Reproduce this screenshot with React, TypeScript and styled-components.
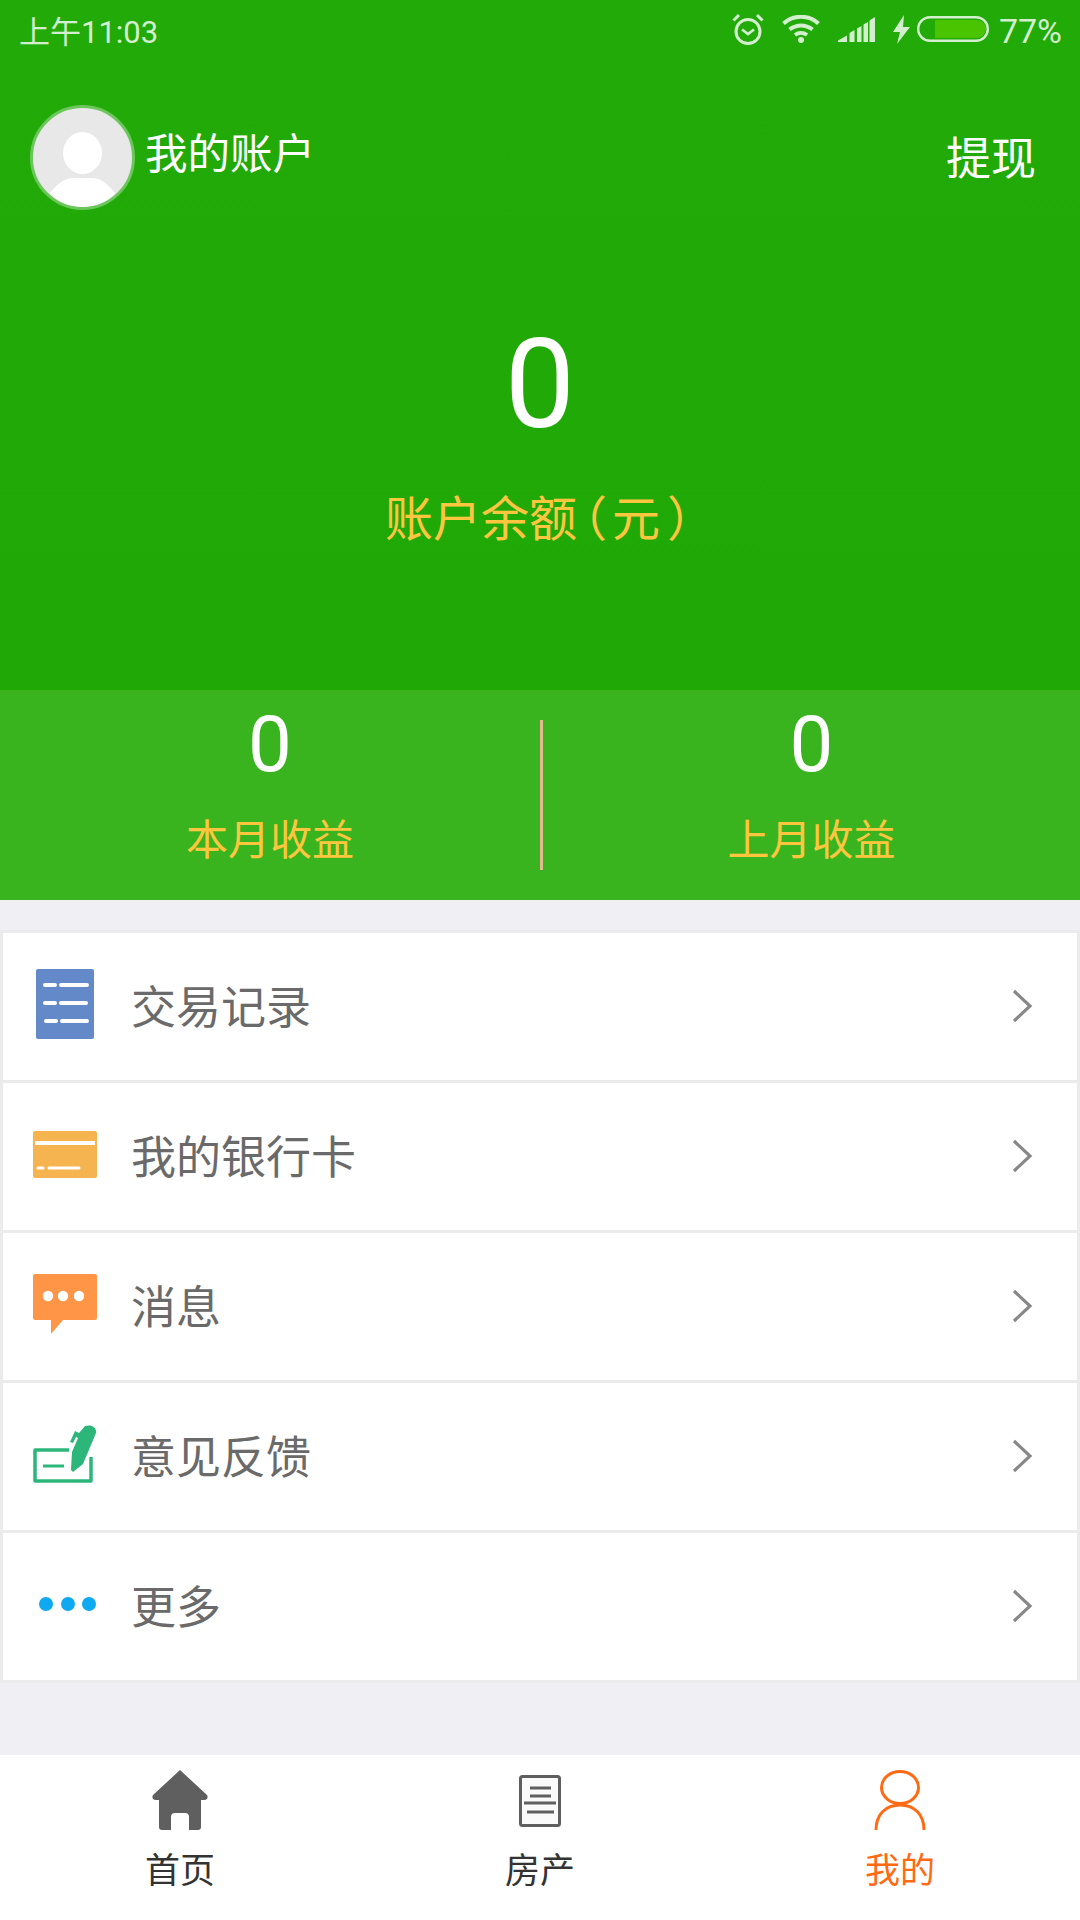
import React from 'react';
import styled, { createGlobalStyle } from 'styled-components';

const GlobalStyle = createGlobalStyle`
  html, body {
    margin: 0;
    padding: 0;
    background: #efeff4;
    font-family: Roboto, "Noto Sans CJK SC", sans-serif;
  }
  * { box-sizing: border-box; }
`;

const Page = styled.div`
  width: 1080px;
  height: 1920px;
  display: flex;
  flex-direction: column;
  background: #efeff4;
  overflow: hidden;
`;

const Hero = styled.header`
  height: 690px;
  background: linear-gradient(180deg, #22aa09 0%, #20a806 100%);
  display: flex;
  flex-direction: column;
`;

const StatusBar = styled.div`
  height: 64px;
  padding: 0 18px 6px 19px;
  display: flex;
  align-items: center;
  justify-content: space-between;
  color: #d4efcf;
  font-size: 31px;
`;

const StatusIcons = styled.div`
  display: flex;
  align-items: center;
`;

const Percent = styled.span`
  margin: 3px 0 0 10px;
  font-size: 34px;
`;

const AccountRow = styled.div`
  height: 105px;
  margin-top: 41px;
  padding: 0 44px 0 30px;
  display: flex;
  align-items: center;
`;

const Avatar = styled.div`
  width: 105px;
  height: 105px;
  border-radius: 50%;
  border: 3px solid #6cc65c;
  background: #e8e8e8;
  overflow: hidden;
  flex: none;
`;

const AccountName = styled.span`
  margin-left: 10px;
  margin-bottom: 14px;
  font-size: 42.500px;
  color: #fff;
`;

const Withdraw = styled.span`
  margin-left: auto;
  margin-bottom: 4px;
  font-size: 45px;
  color: #fff;
`;

const Balance = styled.div`
  margin-top: 105px;
  text-align: center;
  font-size: 125px;
  line-height: 140px;
  color: #fff;
`;

const BalanceLabel = styled.div`
  margin-top: 33px;
  text-align: center;
  font-size: 48px;
  line-height: 64px;
  color: #fdc63e;
`;

const Paren = styled.span<{ $side: 'left' | 'right' }>`
  font-feature-settings: "halt";
  margin-left: ${p => (p.$side === 'left' ? '6px' : '7px')};
  margin-right: ${p => (p.$side === 'left' ? '5px' : '4px')};
`;

const Earnings = styled.section`
  height: 210px;
  background: #3ab41e;
  display: flex;
  align-items: center;
`;

const EarningCell = styled.div<{ $first?: boolean }>`
  flex: ${p => (p.$first ? '0 0 540px' : '1')};
  height: 100%;
  text-align: center;
`;

const EarningValue = styled.div`
  margin-top: 10px;
  font-size: 78px;
  line-height: 90px;
  color: #fff;
`;

const EarningLabel = styled.div`
  margin-top: 21px;
  font-size: 42px;
  line-height: 60px;
  color: #fdc63e;
`;

const Divider = styled.div`
  width: 3px;
  height: 150px;
  flex: none;
  background: #e3b98e;
`;

const MenuList = styled.ul`
  list-style: none;
  margin: 30px 0 0;
  padding: 3px;
  background: #ebebeb;
  display: flex;
  flex-direction: column;
  gap: 3px;
`;

const MenuRow = styled.li`
  height: 147px;
  background: #fff;
  display: flex;
  align-items: center;
  padding: 0 43px 5px 0;
  svg.chevron { margin-top: 3px; }
`;

const MenuIcon = styled.div`
  width: 128px;
  display: flex;
  align-items: center;
  flex: none;
`;

const MenuText = styled.span`
  font-size: 45px;
  color: #6a6a6a;
  flex: 1;
`;

const TabBar = styled.nav`
  margin-top: auto;
  height: 165px;
  background: #fff;
  display: grid;
  grid-template-columns: repeat(3, 360px);
`;

const Tab = styled.div<{ $active?: boolean }>`
  display: flex;
  flex-direction: column;
  align-items: center;
  padding-top: 15px;
  font-size: 35px;
  line-height: 50px;
  color: ${p => (p.$active ? '#ff6a13' : '#333')};
  svg { margin-bottom: 17px; display: block; }
`;

const AlarmIcon = () => (
  <svg width="32" height="32" viewBox="0 0 32 32" fill="none" stroke="#d4efcf" strokeWidth="3" style={{ marginRight: 18 }}>
    <circle cx="16" cy="18.500" r="12" />
    <path d="M10 16.500l6 4.500 6-4.500" strokeWidth="2.600" />
    <path d="M1.500 7.500 7 2M30.500 7.500 25 2" />
  </svg>
);

const WifiIcon = () => (
  <svg width="38" height="28" viewBox="0 0 38 28" fill="none" stroke="#d4efcf" strokeWidth="4" style={{ marginRight: 18 }}>
    <path d="M1.500 8.500C11.500-.5 26.500-.5 36.500 8.500" />
    <path d="M7.500 14.500c7-5.500 16-5.500 23 0" />
    <path d="M13 20c3.600-2.700 8.400-2.700 12 0" />
    <circle cx="19" cy="25" r="3" fill="#d4efcf" stroke="none" />
  </svg>
);

const SignalIcon = () => (
  <svg width="37" height="25" viewBox="0 0 37 25" fill="#d4efcf" style={{ marginRight: 18 }}>
    <path d="M0 25v-1.500l9-5V25zM11.500 25V16l5-3v12zM19 25V11.500l4.500-2.500v16zM25.500 25V7.500l4.500-2.500v20zM31.500 25V3.500L37 0v25z" />
  </svg>
);

const BoltIcon = () => (
  <svg width="17" height="29" viewBox="0 0 17 29" fill="#d4efcf" style={{ marginRight: 7 }}>
    <path d="M11 0 0 17h7L4 29 17 12h-7z" />
  </svg>
);

const BatteryIcon = () => (
  <svg width="72" height="26" viewBox="0 0 72 26">
    <rect x="1.200" y="1.200" width="69.600" height="23.600" rx="11.800" fill="none" stroke="#d4efcf" strokeWidth="2.400" />
    <path d="M18 4h42a9 9 0 0 1 0 18H18z" fill="#4bc400" />
  </svg>
);

const ChevronIcon = () => (
  <svg className="chevron" width="22" height="34" viewBox="0 0 22 34" fill="none" stroke="#888" strokeWidth="3.200">
    <path d="M2 2l16 15L2 32" />
  </svg>
);

const RecordsIcon = () => (
  <svg width="58" height="70" viewBox="0 0 58 70" style={{ marginLeft: 33 }}>
    <rect width="58" height="70" rx="2" fill="#6389c9" />
    <g stroke="#fff" strokeWidth="4" strokeLinecap="round">
      <path d="M9 16h10M25 16h26M9 34h10M25 34h25M10 52h10M26 52h25" />
    </g>
  </svg>
);

const CardIcon = () => (
  <svg width="64" height="47" viewBox="0 0 64 47" style={{ marginLeft: 30 }}>
    <rect width="64" height="47" rx="2" fill="#f5b44f" />
    <path d="M2 12h60" stroke="#fff" strokeWidth="4" />
    <path d="M5 37h5M16 37h30" stroke="#fff" strokeWidth="3" strokeLinecap="round" />
  </svg>
);

const MessageIcon = () => (
  <svg width="64" height="60" viewBox="0 0 64 60" style={{ marginLeft: 30 }}>
    <path d="M2 0h60a2 2 0 0 1 2 2v42a2 2 0 0 1-2 2H30L18 60V46H2a2 2 0 0 1-2-2V2a2 2 0 0 1 2-2z" fill="#ff9647" />
    <circle cx="15" cy="22" r="5.200" fill="#fff" />
    <circle cx="30" cy="22" r="5.200" fill="#fff" />
    <circle cx="46" cy="22" r="5.200" fill="#fff" />
  </svg>
);

const FeedbackIcon = () => (
  <svg width="64" height="58" viewBox="0 0 64 58" style={{ marginLeft: 30 }}>
    <path d="M36 25H2v31h56V32" fill="none" stroke="#2cb67a" strokeWidth="3.500" strokeLinejoin="round" />
    <path d="M10 41h21" stroke="#2cb67a" strokeWidth="3" />
    <path d="M52 1c6-2 12 1 11 7L50 39l-10 8-2-2 1-18 6-14-2-1-3 6-3-1 5-11 4 2z" fill="#2cb67a" />
  </svg>
);

const MoreIcon = () => (
  <svg width="58" height="14" viewBox="0 0 58 14" style={{ marginLeft: 36 }}>
    <circle cx="7" cy="7" r="7" fill="#0ea9f0" />
    <circle cx="29" cy="7" r="7" fill="#0ea9f0" />
    <circle cx="50" cy="7" r="7" fill="#0ea9f0" />
  </svg>
);

const HomeIcon = () => (
  <svg width="58" height="60" viewBox="0 0 58 60">
    <path d="M29 0 56 25q2 4-2 5h-4v27a3 3 0 0 1-3 3H38V47a4 4 0 0 0-4-4H24a4 4 0 0 0-4 4v13h-9a3 3 0 0 1-3-3V30H4q-4-1-2-5z" fill="#5f5f5f" />
  </svg>
);

const ListIcon = () => (
  <svg width="58" height="60" viewBox="0 0 58 60" fill="none" stroke="#5f5f5f" strokeWidth="3">
    <rect x="9.500" y="6.500" width="39" height="49" rx="2" fill="#fafafa" />
    <path d="M19 18h21M19 26h21M13 33h32M16 42h27" />
  </svg>
);

const PersonIcon = () => (
  <svg width="58" height="60" viewBox="0 0 58 60" fill="none" stroke="#ff6a13" strokeWidth="3">
    <ellipse cx="29" cy="17.500" rx="18.500" ry="16" />
    <path d="M5 60C5 44 15 35 29 35s24 9 24 25" />
  </svg>
);

const menuItems = [
  { label: '交易记录', icon: <RecordsIcon /> },
  { label: '我的银行卡', icon: <CardIcon /> },
  { label: '消息', icon: <MessageIcon /> },
  { label: '意见反馈', icon: <FeedbackIcon /> },
  { label: '更多', icon: <MoreIcon /> },
];

const App: React.FC = () => (
  <>
    <GlobalStyle />
    <Page>
      <Hero>
        <StatusBar>
          <span>上午11:03</span>
          <StatusIcons>
            <AlarmIcon />
            <WifiIcon />
            <SignalIcon />
            <BoltIcon />
            <BatteryIcon />
            <Percent>77%</Percent>
          </StatusIcons>
        </StatusBar>
        <AccountRow>
          <Avatar>
            <svg width="99" height="99" viewBox="0 0 99 99">
              <ellipse cx="49.500" cy="45" rx="19.500" ry="21" fill="#fff" />
              <path d="M17 85c6-7 12-15 24-15h17c12 0 18 8 24 15-8 9-20 14-32.500 14S25 94 17 85z" fill="#fff" />
            </svg>
          </Avatar>
          <AccountName>我的账户</AccountName>
          <Withdraw>提现</Withdraw>
        </AccountRow>
        <Balance>0</Balance>
        <BalanceLabel>
          账户余额<Paren $side="left">（</Paren>元<Paren $side="right">）</Paren>
        </BalanceLabel>
      </Hero>
      <Earnings>
        <EarningCell $first>
          <EarningValue>0</EarningValue>
          <EarningLabel>本月收益</EarningLabel>
        </EarningCell>
        <Divider />
        <EarningCell>
          <EarningValue>0</EarningValue>
          <EarningLabel>上月收益</EarningLabel>
        </EarningCell>
      </Earnings>
      <MenuList>
        {menuItems.map(item => (
          <MenuRow key={item.label}>
            <MenuIcon>{item.icon}</MenuIcon>
            <MenuText>{item.label}</MenuText>
            <ChevronIcon />
          </MenuRow>
        ))}
      </MenuList>
      <TabBar>
        <Tab>
          <HomeIcon />
          首页
        </Tab>
        <Tab>
          <ListIcon />
          房产
        </Tab>
        <Tab $active>
          <PersonIcon />
          我的
        </Tab>
      </TabBar>
    </Page>
  </>
);

export default App;
